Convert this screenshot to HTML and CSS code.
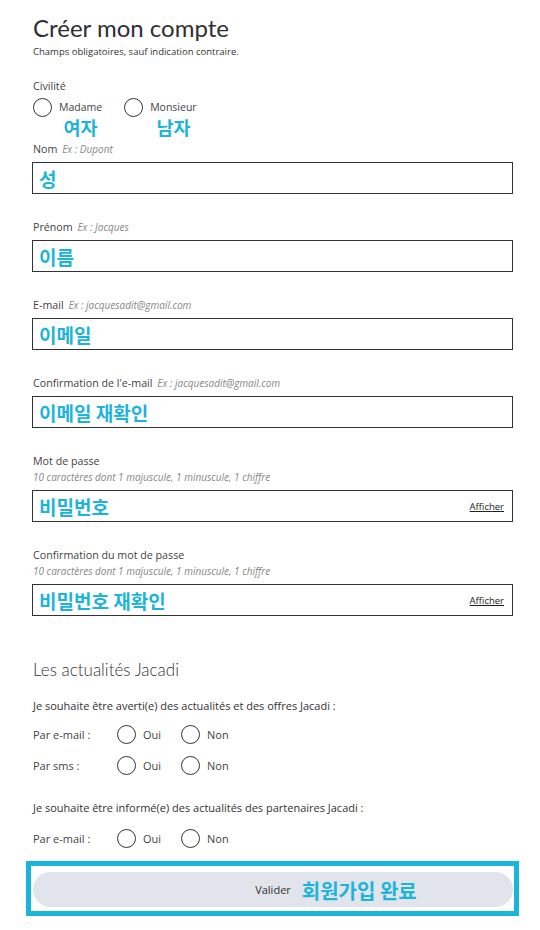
FILE: index.html
```html
<!DOCTYPE html>
<html lang="fr">
<head>
    <meta charset="UTF-8">
    <meta name="viewport" content="width=device-width, initial-scale=1.0">
    <title>Créer mon compte</title>
    <link rel="stylesheet" href="styles.css">
</head>
<body>
    <div class="account">
        <h1>Créer mon compte</h1>
        <p class="required">Champs obligatoires, sauf indication contraire.</p>

        <!-- Civilité -->
        <div class="civility">
            <div class="label">Civilité</div>
            <div class="civility-options">
                <div class="civility-option">
                    <span class="radio"></span>
                    <div class="civility-text">
                        <span>Madame</span>
                        <span class="note">여자</span>
                    </div>
                </div>
                <div class="civility-option">
                    <span class="radio"></span>
                    <div class="civility-text">
                        <span>Monsieur</span>
                        <span class="note">남자</span>
                    </div>
                </div>
            </div>
        </div>

        <div class="field">
            <div class="label">Nom <em>Ex : Dupont</em></div>
            <div class="input"><span class="note">성</span></div>
        </div>

        <div class="field">
            <div class="label">Prénom <em>Ex : Jacques</em></div>
            <div class="input"><span class="note">이름</span></div>
        </div>

        <div class="field">
            <div class="label">E-mail <em>Ex : jacquesadit@gmail.com</em></div>
            <div class="input"><span class="note">이메일</span></div>
        </div>

        <div class="field">
            <div class="label">Confirmation de l'e-mail <em>Ex : jacquesadit@gmail.com</em></div>
            <div class="input"><span class="note">이메일 재확인</span></div>
        </div>

        <div class="field">
            <div class="label">Mot de passe</div>
            <div class="hint">10 caractères dont 1 majuscule, 1 minuscule, 1 chiffre</div>
            <div class="input">
                <span class="note">비밀번호</span>
                <a href="#" class="show-pass">Afficher</a>
            </div>
        </div>

        <div class="field last">
            <div class="label">Confirmation du mot de passe</div>
            <div class="hint">10 caractères dont 1 majuscule, 1 minuscule, 1 chiffre</div>
            <div class="input">
                <span class="note">비밀번호 재확인</span>
                <a href="#" class="show-pass">Afficher</a>
            </div>
        </div>

        <!-- Newsletter -->
        <h2>Les actualités Jacadi</h2>

        <p class="question">Je souhaite être averti(e) des actualités et des offres Jacadi :</p>
        <div class="choice-row">
            <span class="choice-label">Par e-mail :</span>
            <span class="choice"><span class="radio"></span>Oui</span>
            <span class="choice"><span class="radio"></span>Non</span>
        </div>
        <div class="choice-row">
            <span class="choice-label">Par sms :</span>
            <span class="choice"><span class="radio"></span>Oui</span>
            <span class="choice"><span class="radio"></span>Non</span>
        </div>

        <p class="question partners">Je souhaite être informé(e) des actualités des partenaires Jacadi :</p>
        <div class="choice-row">
            <span class="choice-label">Par e-mail :</span>
            <span class="choice"><span class="radio"></span>Oui</span>
            <span class="choice"><span class="radio"></span>Non</span>
        </div>

        <div class="submit-frame">
            <button class="submit-btn">
                <span class="submit-text">Valider<span class="note submit-note">회원가입 완료</span></span>
            </button>
        </div>
    </div>
</body>
</html>
```

FILE: styles.css
```css
body {
    font-family: "Open Sans", Arial, sans-serif;
    margin: 0;
    padding: 0;
    background-color: #ffffff;
    color: #333;
}

.account {
    width: 481px;
    margin-left: 32px;
    padding-top: 13px;
}

h1 {
    font-family: Lato, "Open Sans", sans-serif;
    font-weight: 400;
    font-size: 24px;
    line-height: 30px;
    margin: 0 0 0 1px;
    color: #2f2f33;
}

.required {
    font-size: 9.5px;
    line-height: 14px;
    margin: 2px 0 0 1px;
    color: #333;
}

/* Korean annotations */
.note {
    font-family: "Noto Sans CJK KR", sans-serif;
    font-weight: 700;
    font-size: 19px;
    color: #1cb4da;
}

.label {
    font-size: 10.7px;
    line-height: 14px;
    color: #444;
    margin-left: 1px;
}

.label em {
    font-size: 10px;
    color: #888;
    margin-left: 2px;
}

.hint {
    font-size: 10px;
    font-style: italic;
    line-height: 14px;
    color: #888;
    margin: 2px 0 0 1px;
}

/* Civilité */
.civility {
    margin-top: 20px;
}

.civility-options {
    display: flex;
    gap: 22px;
    margin-top: 5px;
    margin-left: 1px;
}

.civility-option {
    display: flex;
    align-items: flex-start;
    gap: 7px;
}

.civility-text {
    display: flex;
    flex-direction: column;
    align-items: center;
    font-size: 10.5px;
    line-height: 14px;
    padding-top: 2px;
    color: #444;
}

.civility-text .note {
    line-height: 20px;
    margin-top: 3px;
    font-size: 18.5px;
}

.radio {
    display: inline-block;
    box-sizing: border-box;
    width: 19px;
    height: 19px;
    border: 1.3px solid #333;
    border-radius: 50%;
    flex-shrink: 0;
}

/* Inputs */
.field {
    margin-bottom: 26px;
}

.civility + .field {
    margin-top: 5px;
}

.input {
    box-sizing: border-box;
    height: 32px;
    margin-top: 6px;
    border: 1px solid #333;
    padding: 0 8px 0 6px;
    display: flex;
    align-items: center;
    justify-content: space-between;
}

.hint + .input {
    margin-top: 6px;
}

.show-pass {
    font-size: 9.5px;
    color: #222;
    text-decoration: underline;
}

/* Newsletter */
.field.last {
    margin-bottom: 0;
}

h2 {
    font-family: Lato, "Open Sans", sans-serif;
    font-weight: 300;
    font-size: 17px;
    line-height: 22px;
    margin: 43px 0 0 1px;
    color: #333;
}

.question {
    font-size: 11px;
    line-height: 14px;
    margin: 18px 0 0 1px;
    color: #333;
}

.question.partners {
    margin-top: 26px;
}

.choice-row {
    display: flex;
    align-items: center;
    height: 20px;
    margin: 11px 0 0 1px;
    font-size: 11px;
    color: #444;
}

.question + .choice-row {
    margin-top: 11px;
}

.partners + .choice-row {
    margin-top: 13px;
}

.choice-label {
    width: 84px;
}

.choice {
    display: flex;
    align-items: center;
    gap: 7px;
    width: 64px;
}

/* Submit */
.submit-frame {
    margin: 13px 0 0 -6px;
    width: 493px;
    box-sizing: border-box;
    border: 5px solid #1ab5d9;
    padding: 6px 1px 4px 2px;
}

.submit-btn {
    display: block;
    width: 100%;
    height: 35px;
    border: none;
    border-radius: 18px;
    background-color: #e1e4eb;
    font-family: "Open Sans", Arial, sans-serif;
    font-size: 11px;
    color: #333;
    cursor: pointer;
}

.submit-text {
    position: relative;
}

.submit-note {
    position: absolute;
    left: 100%;
    top: 50%;
    transform: translateY(-50%);
    margin-left: 11px;
    font-size: 20px;
    white-space: nowrap;
}
```
